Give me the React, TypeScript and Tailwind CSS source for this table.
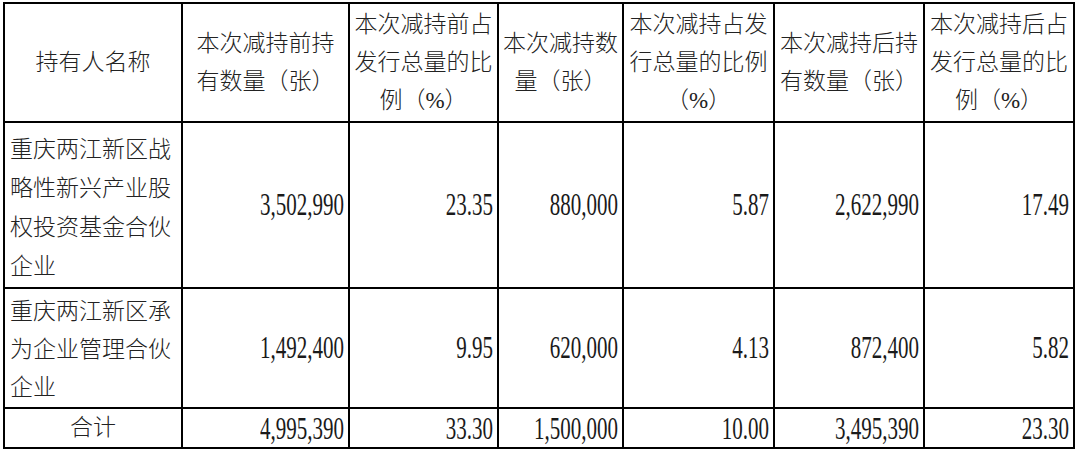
const colWidths = [178, 167, 149, 125, 151, 150, 150];

const headers: string[][] = [
  ['持有人名称'],
  ['本次减持前持', '有数量（张）'],
  ['本次减持前占', '发行总量的比', '例（%）'],
  ['本次减持数', '量（张）'],
  ['本次减持占发', '行总量的比例', '（%）'],
  ['本次减持后持', '有数量（张）'],
  ['本次减持后占', '发行总量的比', '例（%）'],
];

const rows = [
  {
    name: ['重庆两江新区战', '略性新兴产业股', '权投资基金合伙', '企业'],
    values: ['3,502,990', '23.35', '880,000', '5.87', '2,622,990', '17.49'],
    height: 'h-[166px]',
    nameCls: 'pt-[6px] leading-[39px]',
  },
  {
    name: ['重庆两江新区承', '为企业管理合伙', '企业'],
    values: ['1,492,400', '9.95', '620,000', '4.13', '872,400', '5.82'],
    height: 'h-[120px]',
    nameCls: 'pt-[3px] leading-[38px]',
  },
];

const total = ['4,995,390', '33.30', '1,500,000', '10.00', '3,495,390', '23.30'];

// digits in the scan are tall and narrow, so stretch them vertically
function Num({ value }: { value: string }) {
  return (
    <span className="inline-block scale-y-[1.5] font-['Liberation_Serif',serif] text-[21px] leading-none text-[#1a1a1a]">
      {value}
    </span>
  );
}

function Lines({ lines }: { lines: string[] }) {
  return (
    <>
      {lines.map((l, i) => (
        <div key={i}>{l}</div>
      ))}
    </>
  );
}

export default function App() {
  return (
    <div className="w-[1080px] h-[453px] overflow-hidden bg-white pl-[3px] pt-[2px] font-['Liberation_Serif','Noto_Sans_CJK_SC',serif] text-[23px] text-[#222] font-light">
      <table className="table-fixed border-collapse w-[1071px]">
        <colgroup>
          {colWidths.map((w, i) => (
            <col key={i} style={{ width: w }} />
          ))}
        </colgroup>
        <thead>
          <tr className="h-[119px]">
            {headers.map((h, i) => (
              <th key={i} className="border-2 border-black text-center align-middle font-light leading-[38px] p-0">
                <Lines lines={h} />
              </th>
            ))}
          </tr>
        </thead>
        <tbody>
          {rows.map((r, i) => (
            <tr key={i} className={r.height}>
              <td className={`border-2 border-black p-0 pl-[5px] align-middle ${r.nameCls}`}>
                <Lines lines={r.name} />
              </td>
              {r.values.map((v, j) => (
                <td key={j} className="border-2 border-black p-0 text-right pr-[4px] align-middle">
                  <Num value={v} />
                </td>
              ))}
            </tr>
          ))}
          <tr className="h-[40px]">
            <td className="border-2 border-black p-0 text-center leading-[28px]">合计</td>
            {total.map((v, j) => (
              <td key={j} className="border-2 border-black p-0 text-right pr-[4px] align-middle leading-none">
                <Num value={v} />
              </td>
            ))}
          </tr>
        </tbody>
      </table>
    </div>
  );
}
